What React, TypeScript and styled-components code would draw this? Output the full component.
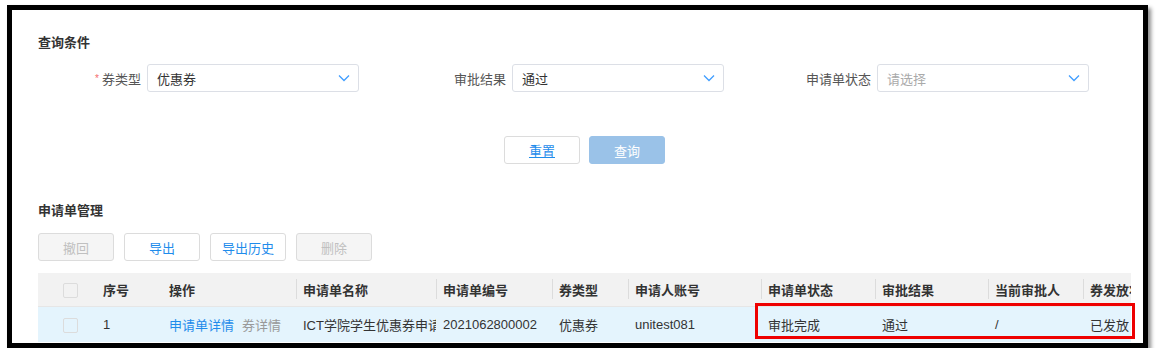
import React from 'react';
import styled, {createGlobalStyle} from 'styled-components';

const GlobalStyle = createGlobalStyle`
  html, body {
    margin: 0;
    padding: 0;
    background: #fff;
  }
  body {
    font-family: "Liberation Sans", "Noto Sans CJK SC", sans-serif;
    font-size: 13px;
    color: #333;
  }
`;

const Page = styled.div`
  padding: 5px 0 0 7px;
`;

const Frame = styled.div`
  position: relative;
  box-sizing: border-box;
  width: 1141px;
  height: 343px;
  border: 5px solid #000;
  box-shadow: 3px 3px 4px rgba(0, 0, 0, 0.45);
  background: #fff;
  overflow: hidden;
  padding: 0 12px 0 26px;
`;

const SectionTitle = styled.div`
  font-size: 13px;
  font-weight: bold;
  color: #333;
  line-height: 18px;
  margin-top: ${p => p.top}px;
`;

const FormGrid = styled.div`
  display: grid;
  grid-template-columns: repeat(3, 365px);
  margin-top: 12px;
`;

const Field = styled.div`
  display: flex;
  align-items: center;
`;

const Label = styled.label`
  width: 103px;
  margin-right: 6px;
  text-align: right;
  color: #555;
  font-size: 13px;
`;

const Star = styled.span`
  color: #f56c6c;
  font-size: 10px;
  margin-right: 3px;
  vertical-align: 2px;
`;

const Select = styled.div`
  box-sizing: border-box;
  width: 212px;
  height: 28px;
  border: 1px solid #dcdfe6;
  border-radius: 3px;
  display: flex;
  align-items: center;
  justify-content: space-between;
  padding: 0 8px 0 9px;
  color: ${p => (p.placeholder ? '#aaa' : '#333')};
`;

const Chevron = () => (
  <svg width="12" height="8" viewBox="0 0 12 8">
    <polyline points="1,1.5 6,6.5 11,1.5" fill="none" stroke="#409eff" strokeWidth="1.3"/>
  </svg>
);

const ActionRow = styled.div`
  display: flex;
  justify-content: center;
  gap: 9px;
  margin-top: 44px;
`;

const Button = styled.button`
  box-sizing: border-box;
  width: 76px;
  height: 28px;
  border-radius: 3px;
  font-family: inherit;
  font-size: 13px;
  padding: 0;
  cursor: pointer;
  border: 1px solid ${p => (p.primary ? '#9ac2e8' : '#dcdcdc')};
  background: ${p => (p.primary ? '#9ac2e8' : p.disabled ? '#f5f5f5' : '#fff')};
  color: ${p => (p.primary ? '#fff' : p.disabled ? '#c0c0c0' : '#1f8ceb')};
  text-decoration: ${p => (p.underline ? 'underline' : 'none')};
`;

const Toolbar = styled.div`
  display: flex;
  gap: 10px;
  margin-top: 13px;
`;

const TableWrap = styled.div`
  width: 1093px;
  overflow: hidden;
  margin-top: 12px;
`;

const Table = styled.table`
  width: 1145px;
  table-layout: fixed;
  border-collapse: collapse;
`;

const HeadCell = styled.th`
  position: relative;
  height: 33px;
  background: #f2f2f2;
  border-bottom: 1px solid #e6e6e6;
  text-align: ${p => (p.center ? 'center' : 'left')};
  padding: 0 0 0 7px;
  font-weight: bold;
  color: #333;
  white-space: nowrap;
  overflow: hidden;
  &::before {
    content: '';
    display: ${p => (p.sep ? 'block' : 'none')};
    position: absolute;
    left: 0;
    top: 6px;
    width: 1px;
    height: 20px;
    background: #dcdcdc;
  }
`;

const Cell = styled.td`
  height: 35px;
  background: #e4f4fd;
  text-align: ${p => (p.center ? 'center' : 'left')};
  padding: 0 0 0 7px;
  white-space: nowrap;
  overflow: hidden;
  color: #333;
`;

const Check = styled.span`
  display: inline-block;
  box-sizing: border-box;
  width: 15px;
  height: 15px;
  border: 1px solid #dcdcdc;
  border-radius: 2px;
  background: ${p => p.bg};
  vertical-align: middle;
`;

const Link = styled.span`
  color: ${p => (p.muted ? '#999' : '#1f8ceb')};
  margin-right: 8px;
`;

const Highlight = styled.div`
  position: absolute;
  left: 743px;
  top: 293px;
  width: 380px;
  height: 36px;
  box-sizing: border-box;
  border: 3px solid #ee0000;
  pointer-events: none;
`;

const columns = [
  {w: 58, title: null, center: true},
  {w: 66, title: '序号'},
  {w: 134, title: '操作'},
  {w: 140, title: '申请单名称', sep: true},
  {w: 116, title: '申请单编号', sep: true},
  {w: 76, title: '券类型', sep: true},
  {w: 133, title: '申请人账号', sep: true},
  {w: 114, title: '申请单状态', sep: true},
  {w: 113, title: '审批结果', sep: true},
  {w: 95, title: '当前审批人', sep: true},
  {w: 100, title: '券发放状态', sep: true},
];

const App = () => (
  <Page>
    <GlobalStyle/>
    <Frame>
      <SectionTitle top={24}>查询条件</SectionTitle>
      <FormGrid>
        <Field>
          <Label><Star>*</Star>券类型</Label>
          <Select>优惠券<Chevron/></Select>
        </Field>
        <Field>
          <Label>审批结果</Label>
          <Select>通过<Chevron/></Select>
        </Field>
        <Field>
          <Label>申请单状态</Label>
          <Select placeholder>请选择<Chevron/></Select>
        </Field>
      </FormGrid>
      <ActionRow>
        <Button underline>重置</Button>
        <Button primary>查询</Button>
      </ActionRow>
      <SectionTitle top={38}>申请单管理</SectionTitle>
      <Toolbar>
        <Button disabled>撤回</Button>
        <Button>导出</Button>
        <Button>导出历史</Button>
        <Button disabled>删除</Button>
      </Toolbar>
      <TableWrap>
        <Table>
          <colgroup>
            {columns.map((c, k) => <col key={k} style={{width: c.w}}/>)}
          </colgroup>
          <thead>
            <tr>
              {columns.map((c, k) => (
                <HeadCell key={k} sep={c.sep} center={c.center}>
                  {c.title ?? <Check bg="#f2f2f2"/>}
                </HeadCell>
              ))}
            </tr>
          </thead>
          <tbody>
            <tr>
              <Cell center><Check bg="#e4f4fd"/></Cell>
              <Cell>1</Cell>
              <Cell><Link>申请单详情</Link><Link muted>券详情</Link></Cell>
              <Cell style={{textOverflow: 'clip'}}>ICT学院学生优惠券申请单</Cell>
              <Cell>2021062800002</Cell>
              <Cell>优惠券</Cell>
              <Cell>unitest081</Cell>
              <Cell>审批完成</Cell>
              <Cell>通过</Cell>
              <Cell>/</Cell>
              <Cell>已发放</Cell>
            </tr>
          </tbody>
        </Table>
      </TableWrap>
      <Highlight/>
    </Frame>
  </Page>
);

export default App;
